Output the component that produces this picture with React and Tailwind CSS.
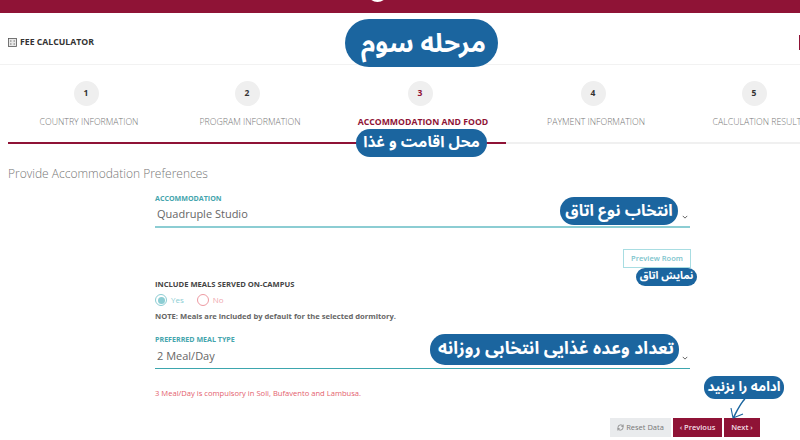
import React from "react";
import { RefreshCw } from "lucide-react";

const steps = [
  { n: "1", label: "COUNTRY INFORMATION", cx: "w-[172px]" },
  { n: "2", label: "PROGRAM INFORMATION", cx: "w-[150px]" },
  { n: "3", label: "ACCOMMODATION AND FOOD", cx: "w-[196px]", active: true },
  { n: "4", label: "PAYMENT INFORMATION", cx: "w-[150px]" },
  { n: "5", label: "CALCULATION RESULT", cx: "w-[172px]" },
];

const persian = "font-['Noto_Sans_Arabic','Noto_Sans','DejaVu_Sans',sans-serif]";

function Tag({ className, children }) {
  return (
    <div
      dir="rtl"
      className={`absolute flex items-center justify-center bg-[#1b659f] text-white font-bold whitespace-nowrap ${persian} ${className}`}
    >
      {children}
    </div>
  );
}

function Chevron({ className }) {
  return (
    <svg viewBox="0 0 8 5" className={className} fill="none" stroke="#555" strokeWidth="1.2">
      <path d="M1 1l3 3 3-3" />
    </svg>
  );
}

function Select({ label, value, lineClass }) {
  return (
    <div className="w-[535px]">
      <div className="text-[7.1px] leading-[10px] font-bold text-[#45a5ad]">{label}</div>
      <div className={`flex items-center justify-between pl-[2px] pr-[2px] h-[25px] ${lineClass}`}>
        <span className="text-[11px] text-[#666]">{value}</span>
        <Chevron className="w-[6px] h-[4px] mt-[4px]" />
      </div>
    </div>
  );
}

export default function App() {
  return (
    <div className="relative w-[800px] h-[440px] overflow-hidden bg-white font-['Open_Sans',sans-serif]">
      <div className="h-[13px] bg-[#8f1336] relative">
        <div className="absolute left-[367px] top-[-22px] w-[21px] h-[24px] rounded-full bg-white" />
      </div>

      <header className="h-[52px] flex items-center justify-between pl-[8px] border-b border-[#f2f2f2]">
        <div className="flex items-center gap-[3px] mt-[8px]">
          <svg viewBox="0 0 9 9" className="w-[9px] h-[9px]" fill="none" stroke="#555" strokeWidth="0.8">
            <rect x="0.5" y="0.5" width="8" height="8" fill="#e8e8e8" />
            <path d="M2 3h1.5M5.5 3H7M2 6h1.5M5.5 6H7" />
          </svg>
          <span className="text-[8.7px] font-bold text-[#333]">FEE CALCULATOR</span>
        </div>
        <div className="w-[1px] h-[15px] bg-[#8f1336] mt-[8px]" />
      </header>

      <nav className="flex pt-[16px]">
        {steps.map((s) => (
          <div key={s.n} className={`${s.cx} shrink-0 flex flex-col items-center`}>
            <div
              className={`w-[25px] h-[25px] rounded-full bg-[#efefef] flex items-center justify-center text-[8.5px] font-bold ${
                s.active ? "text-[#8f1336]" : "text-[#333]"
              }`}
            >
              {s.n}
            </div>
            <div
              className={`mt-[10px] ml-[6px] whitespace-nowrap leading-[12px] ${
                s.active ? "text-[8.7px] font-bold text-[#8f1336]" : "text-[8.75px] font-light text-[#777]"
              }`}
            >
              {s.label}
            </div>
          </div>
        ))}
      </nav>

      <div className="mt-[14px] ml-[8px] h-[2px] flex">
        <div className="w-[498px] bg-[#8f1336]" />
        <div className="flex-1 bg-[#f0f0f0]" />
      </div>

      <h2 className="mt-[21px] ml-[8px] text-[12px] leading-[17px] text-[#777] font-light">
        Provide Accommodation Preferences
      </h2>

      <main className="ml-[155px] w-[536px] mt-[11px]">
        <Select label="ACCOMMODATION" value="Quadruple Studio" lineClass="border-b-2 border-[#8ccdd3]" />
        <div className="flex justify-end mt-[21px]">
          <button className="w-[68px] h-[19px] border border-[#a8dde2] text-[7.5px] font-semibold text-[#7cc4cc]">
            Preview Room
          </button>
        </div>
        <div className="mt-[11px] text-[7.6px] leading-[10px] font-bold text-[#444]">
          INCLUDE MEALS SERVED ON-CAMPUS
        </div>
        <div className="mt-[5px] flex items-center h-[12px] text-[8px]">
          <span className="w-[12px] h-[12px] rounded-full border border-[#8ccdd3] flex items-center justify-center">
            <span className="w-[7px] h-[7px] rounded-full bg-[#8ccdd3]" />
          </span>
          <span className="ml-[4px] text-[#8ccdd3]">Yes</span>
          <span className="ml-[13px] w-[12px] h-[12px] rounded-full border border-[#ee9aa2]" />
          <span className="ml-[4px] text-[#f0a8af]">No</span>
        </div>
        <div className="mt-[5px] text-[7.6px] leading-[10px] font-bold text-[#666]">
          NOTE: Meals are included by default for the selected dormitory.
        </div>
        <div className="mt-[13px]">
          <Select label="PREFERRED MEAL TYPE" value="2 Meal/Day" lineClass="border-b border-[#3da6ae]" />
        </div>
        <div className="mt-[19px] text-[7.6px] leading-[10px] text-[#e4606d]">
          3 Meal/Day is compulsory in Soli, Bufavento and Lambusa.
        </div>
      </main>

      <div className="absolute right-[40px] top-[418px] flex gap-[2px] text-[7.5px]">
        <button className="w-[61px] h-[19px] bg-[#e9ebed] text-[#777] flex items-center justify-center gap-[2px]">
          <RefreshCw className="w-[7px] h-[7px]" strokeWidth={2.5} />
          Reset Data
        </button>
        <button className="w-[49px] h-[19px] bg-[#8f1336] text-[#f4dfe5] font-semibold">‹ Previous</button>
        <button className="w-[36px] h-[19px] bg-[#8f1336] text-[#f4dfe5] font-semibold">Next ›</button>
      </div>

      <Tag className="left-[345px] top-[19px] w-[153px] h-[48px] rounded-[24px] text-[26px] pl-[4px]">مرحله سوم</Tag>
      <Tag className="left-[356px] top-[129px] w-[131px] h-[28px] rounded-[14px] text-[15.5px]">محل اقامت و غذا</Tag>
      <Tag className="left-[560px] top-[197px] w-[118px] h-[28px] rounded-[14px] text-[16px]">انتخاب نوع اتاق</Tag>
      <Tag className="left-[636px] top-[268px] w-[61px] h-[18px] rounded-[9px] text-[10.5px]">نمایش اتاق</Tag>
      <Tag className="left-[430px] top-[334px] w-[249px] h-[31px] rounded-[15px] text-[17.5px] pl-[3px]">تعداد وعده غذایی انتخابی روزانه</Tag>
      <Tag className="left-[704px] top-[376px] w-[80px] h-[23px] rounded-[11px] text-[13.5px]">ادامه را بزنید</Tag>

      <svg className="absolute left-[726px] top-[396px] w-[24px] h-[24px]" viewBox="0 0 24 24" fill="none" stroke="#1b659f" strokeWidth="1.1">
        <path d="M20 1.5C15 6 11 14 7 22M19 3C14 8 11 15 8 21M5 12l2 10 10-4" />
      </svg>
    </div>
  );
}
